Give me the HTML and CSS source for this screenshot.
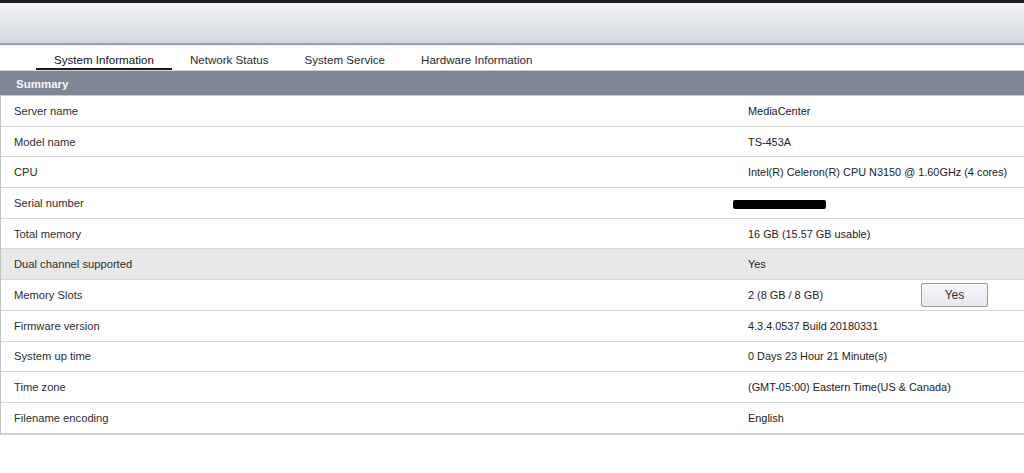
FILE: index.html
```html
<!DOCTYPE html>
<html>
<head>
<meta charset="utf-8">
<link rel="stylesheet" href="styles.css">
</head>
<body>
<div class="topbar"></div>
<div class="header"></div>
<nav class="tabs">
  <div class="tab active">System Information</div>
  <div class="tab">Network Status</div>
  <div class="tab">System Service</div>
  <div class="tab">Hardware Information</div>
</nav>
<section class="panel">
  <div class="panel-title">Summary</div>
  <div class="rows">
    <div class="row"><div class="label">Server name</div><div class="value">MediaCenter</div></div>
    <div class="row"><div class="label">Model name</div><div class="value">TS-453A</div></div>
    <div class="row"><div class="label">CPU</div><div class="value">Intel(R) Celeron(R) CPU N3150 @ 1.60GHz (4 cores)</div></div>
    <div class="row"><div class="label">Serial number</div><div class="value"><span class="redact"></span></div></div>
    <div class="row"><div class="label">Total memory</div><div class="value">16 GB (15.57 GB usable)</div></div>
    <div class="row shaded"><div class="label">Dual channel supported</div><div class="value">Yes</div></div>
    <div class="row"><div class="label">Memory Slots</div><div class="value"><span class="slots">2 (8 GB / 8 GB)</span><button class="btn">Yes</button></div></div>
    <div class="row"><div class="label">Firmware version</div><div class="value">4.3.4.0537 Build 20180331</div></div>
    <div class="row"><div class="label">System up time</div><div class="value">0 Days 23 Hour 21 Minute(s)</div></div>
    <div class="row"><div class="label">Time zone</div><div class="value">(GMT-05:00) Eastern Time(US &amp; Canada)</div></div>
    <div class="row last"><div class="label">Filename encoding</div><div class="value">English</div></div>
  </div>
</section>
</body>
</html>
```
FILE: styles.css
```css
html, body {
  margin: 0;
  padding: 0;
  background: #ffffff;
  font-family: "Liberation Sans", Arial, sans-serif;
  overflow: hidden;
}

.topbar {
  height: 3px;
  background: #1d1d1d;
}

.header {
  height: 40px;
  background: linear-gradient(#f2f4f6, #d2d8df);
  border-bottom: 2px solid #9ba1a8;
}

.tabs {
  display: flex;
  height: 24px;
  padding-left: 36px;
  background: #ffffff;
  border-top: 1px solid #eceef0;
}

.tab {
  padding: 0 18px;
  font-size: 11.6px;
  line-height: 28px;
  color: #2a2a2a;
  box-sizing: border-box;
  height: 24px;
}

.tab.active {
  color: #111;
  border-bottom: 2px solid #1a1a1a;
}

.panel {
  border-left: 1px solid #c4c4c4;
}

.panel-title {
  margin-left: -1px;
  height: 24px;
  background: #7f8797;
  border-top: 1px solid #d2d2d2;
  border-bottom: 1px solid #c9cdd3;
  color: #f4f5f7;
  font-weight: bold;
  font-size: 11.5px;
  line-height: 26px;
  padding-left: 16px;
}

.row {
  display: flex;
  align-items: center;
  height: 29.7px;
  border-bottom: 1px solid #d6d6d6;
  font-size: 11.2px;
  color: #2e2e2e;
}

.row.shaded {
  background: #e8e8e8;
}

.row.last {
  border-bottom: 2px solid #cfcfcf;
}

.label {
  width: 734px;
  padding-left: 13px;
}

.value {
  display: flex;
  align-items: center;
  color: #222;
  font-size: 10.9px;
}

.slots {
  width: 173px;
}

.btn {
  width: 67px;
  height: 24px;
  margin-top: 1px;
  border: 1px solid #9a9aa0;
  border-radius: 2px;
  background: linear-gradient(#f8f8fb, #e6e6ec);
  font-family: "Liberation Sans", Arial, sans-serif;
  font-size: 12px;
  color: #333;
  padding: 0;
}

.redact {
  display: block;
  width: 93px;
  height: 9px;
  margin-left: -15px;
  margin-top: 3px;
  background: #000;
  border-radius: 2px;
}
```
